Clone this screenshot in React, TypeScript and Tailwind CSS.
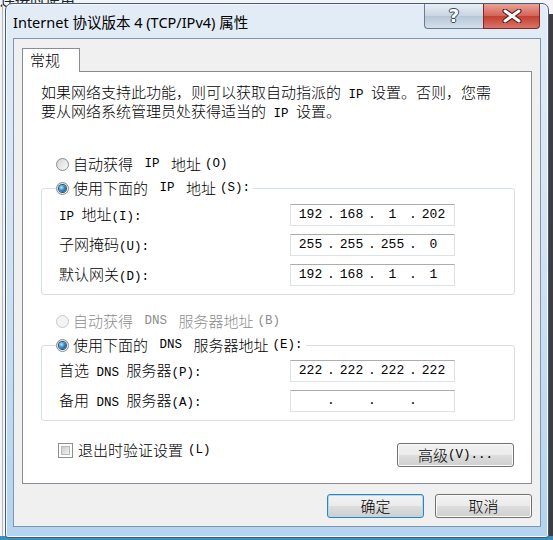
import { Fragment } from "react";

// ASCII runs get the narrow mono face, the rest stays in the CJK face (SimSun look-alike)
const T = ({ s }: { s: string }) => (
  <>
    {s.split(/([ -~]+)/).map((p, i) =>
      /[ -~]/.test(p) ? (
        <span key={i} className="font-['Liberation_Mono',monospace] text-[12.5px] whitespace-pre">
          {p}
        </span>
      ) : (
        <Fragment key={i}>{p}</Fragment>
      )
    )}
  </>
);

const Radio = ({ on, disabled }: { on?: boolean; disabled?: boolean }) => (
  <span
    className={
      "w-[13px] h-[13px] rounded-full border flex items-center justify-center shrink-0 " +
      (disabled
        ? "border-[#c9c9c9] bg-[#f3f3f3]"
        : "border-[#8a8c8e] bg-[linear-gradient(135deg,#d4d4d4,#fbfbfb)]")
    }
  >
    {on && (
      <span className="w-[7px] h-[7px] rounded-full bg-[radial-gradient(circle_at_35%_35%,#b8e6ff,#2a86c8_50%,#0c3d6b)] ring-1 ring-[#2d4f6e]" />
    )}
  </span>
);

const IpBox = ({ parts }: { parts: string[] }) => (
  <div className="w-[165px] h-[22px] shrink-0 border border-[#dde2e8] border-t-[#abadb3] bg-white flex items-center pl-[3px] font-['Liberation_Mono',monospace] text-[13px] text-black">
    {parts.map((p, i) => (
      <Fragment key={i}>
        {i > 0 && <span className="w-[8px] text-center">.</span>}
        <span className="w-[33px] text-center">{p}</span>
      </Fragment>
    ))}
  </div>
);

const Row = ({ label, parts }: { label: string; parts: string[] }) => (
  <div className="h-[22px] flex items-center pl-[17px] pr-[59px]">
    <span className="flex-1">
      <T s={label} />
    </span>
    <IpBox parts={parts} />
  </div>
);

const Btn = ({ children, w, primary }: { children: React.ReactNode; w: string; primary?: boolean }) => (
  <button
    className={
      "h-[24px] rounded-[3px] border flex items-center justify-center bg-[linear-gradient(#f2f2f2_0%,#ebebeb_48%,#dddddd_52%,#cfcfcf_100%)] text-black font-light " +
      w +
      (primary ? " border-[#3c7fb1] shadow-[inset_0_0_0_1px_#a6dcf6]" : " border-[#707070] shadow-[inset_0_0_0_1px_#fbfbfb]")
    }
  >
    {children}
  </button>
);

export default function App() {
  return (
    <div className="relative w-[553px] h-[540px] overflow-hidden bg-[#f4f4f4] font-['Noto_Sans_CJK_SC',sans-serif] text-[15px] text-black">
      {/* desktop behind the dialog */}
      <div className="absolute left-0 top-[-12px] text-[15px] text-[#222]">连接时使用:</div>
      <div className="absolute left-[2px] top-0 bottom-0 w-px bg-[#b8b8b8]" />
      <div className="absolute right-0 top-[14px] bottom-0 w-[4px] bg-[#3e3e3e]" />
      <div className="absolute left-0 right-0 bottom-0 h-[4px] bg-[#3b8fb9]" />

      {/* window */}
      <div className="absolute left-[5px] top-[3px] w-[544px] h-[535px] rounded-t-[7px] rounded-b-[3px] border border-[#3f5d7d] bg-[linear-gradient(to_bottom,#e3ecf6,#d3e3f3_45%,#b3d3ef)] px-[7px] pb-[9px] flex flex-col shadow-[inset_0_0_0_1px_#f4f9ff]">
        <div className="h-[34px] flex items-start">
          <span className="self-center font-['Noto_Sans','Noto_Sans_CJK_SC',sans-serif] text-[14.5px] text-black mt-[3px]">
            Internet 协议版本 4 (TCP/IPv4) 属性
          </span>
          <div className="ml-auto mr-px flex">
            <div className="w-[59px] h-[25px] rounded-bl-[4px] border border-[#6b7c90] border-t-0 border-r-0 bg-[linear-gradient(#e8eef5,#c9d5e2_50%,#b7c6d6_51%,#d3dfeb)] flex items-center justify-center">
              <span className="font-['DejaVu_Sans',sans-serif] font-bold text-[18px] leading-none text-white [text-shadow:0_0_1px_#3a4a5c,1px_0_0_#3a4a5c,-1px_0_0_#3a4a5c,0_1px_0_#3a4a5c,0_-1px_0_#3a4a5c]">
                ?
              </span>
            </div>
            <div className="w-[57px] h-[25px] rounded-br-[4px] border border-[#7a2a22] border-t-0 bg-[linear-gradient(#e9a296,#d4655a_48%,#c4402f_52%,#d8746a)] flex items-center justify-center">
              <svg width="20" height="14" viewBox="0 0 20 14">
                <path d="M3 2 L17 12 M17 2 L3 12" stroke="#4a1a14" strokeWidth="5" strokeLinecap="round" />
                <path d="M3 2 L17 12 M17 2 L3 12" stroke="#fff" strokeWidth="3" strokeLinecap="round" />
              </svg>
            </div>
          </div>
        </div>

        {/* dialog body */}
        <div className="h-[489px] border border-[#7d97b3] bg-[#f0f0f0] px-[8px] pt-[9px] flex flex-col">
          <div className="relative z-10 -mb-px w-[58px] h-[24px] border border-b-0 border-[#898c95] bg-white pl-[7px] flex items-center font-light">
            常规
          </div>
          <div className="w-[510px] h-[413px] border border-[#898c95] bg-white font-light">
            <p className="pt-[12px] pl-[18px] leading-[15px]">
              <T s="如果网络支持此功能，则可以获取自动指派的 IP 设置。否则，您需" />
              <br />
              <T s="要从网络系统管理员处获得适当的 IP 设置。" />
            </p>

            <div className="mt-[34px] pl-[33px] h-[16px] flex items-center gap-[4px]">
              <Radio />
              <T s="自动获得 IP 地址(O)" />
            </div>

            <fieldset className="mt-[8px] ml-[18px] w-[474px] border border-[#d5dfe5] rounded-[3px] pb-[8px]">
              <legend className="ml-[14px] pr-[3px]">
                <span className="h-[16px] flex items-center gap-[4px]">
                  <Radio on />
                  <T s="使用下面的 IP 地址(S):" />
                </span>
              </legend>
              <div className="mt-[8px] flex flex-col gap-[8px]">
                <Row label="IP 地址(I):" parts={["192", "168", "1", "202"]} />
                <Row label="子网掩码(U):" parts={["255", "255", "255", "0"]} />
                <Row label="默认网关(D):" parts={["192", "168", "1", "1"]} />
              </div>
            </fieldset>

            <div className="mt-[18px] pl-[33px] h-[16px] flex items-center gap-[4px] text-[#8d8d8d]">
              <Radio disabled />
              <T s="自动获得 DNS 服务器地址(B)" />
            </div>

            <fieldset className="mt-[8px] ml-[18px] w-[474px] border border-[#d5dfe5] rounded-[3px] pb-[8px]">
              <legend className="ml-[14px] pr-[3px]">
                <span className="h-[16px] flex items-center gap-[4px]">
                  <Radio on />
                  <T s="使用下面的 DNS 服务器地址(E):" />
                </span>
              </legend>
              <div className="mt-[7px] flex flex-col gap-[8px]">
                <Row label="首选 DNS 服务器(P):" parts={["222", "222", "222", "222"]} />
                <Row label="备用 DNS 服务器(A):" parts={["", "", "", ""]} />
              </div>
            </fieldset>

            <div className="mt-[22px] pl-[35px] pr-[17px] flex items-start justify-between">
              <div className="flex items-center gap-[5px] h-[15px]">
                <span className="w-[15px] h-[15px] border border-[#8e8f8f] bg-white p-[2px] shrink-0">
                  <span className="block w-full h-full bg-[linear-gradient(135deg,#cbcbcb,#f2f2f2)] border border-[#b9b9b9]" />
                </span>
                <T s="退出时验证设置(L)" />
              </div>
              <Btn w="w-[117px]">
                <T s="高级(V)..." />
              </Btn>
            </div>
          </div>

          <div className="mt-[10px] w-[510px] flex justify-end gap-[11px]">
            <Btn w="w-[97px]" primary>
              确定
            </Btn>
            <Btn w="w-[97px]">取消</Btn>
          </div>
        </div>
      </div>
    </div>
  );
}
